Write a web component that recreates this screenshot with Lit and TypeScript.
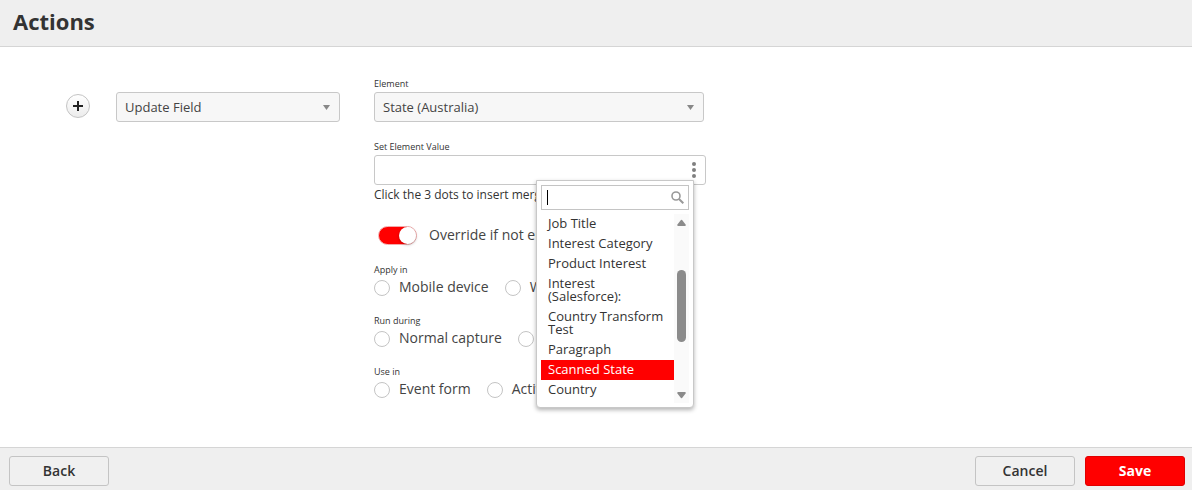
import { LitElement, html, css, nothing } from 'lit';
import { customElement, property, state } from 'lit/decorators.js';
import { classMap } from 'lit/directives/class-map.js';

interface RadioGroup {
  name: string;
  label: string;
  options: string[];
}

const GROUPS: RadioGroup[] = [
  { name: 'applyIn', label: 'Apply in', options: ['Mobile device', 'Web form'] },
  { name: 'runDuring', label: 'Run during', options: ['Normal capture', 'Transcription'] },
  { name: 'useIn', label: 'Use in', options: ['Event form', 'Activations'] },
];

const MERGE_FIELDS = [
  'Job Title',
  'Interest Category',
  'Product Interest',
  'Interest (Salesforce):',
  'Country Transform Test',
  'Paragraph',
  'Scanned State',
  'Country',
];

@customElement('merge-field-menu')
export class MergeFieldMenu extends LitElement {
  static override styles = css`
    :host {
      display: block;
      box-sizing: border-box;
      width: 158px;
      padding: 4px;
      background: #fff;
      border: 1px solid #c8c8c8;
      border-radius: 0 0 4px 4px;
      box-shadow: 0 2px 4px rgba(0, 0, 0, 0.3);
    }
    .search {
      position: relative;
      display: flex;
      align-items: center;
      height: 25px;
      box-sizing: border-box;
      padding: 0 4px 0 6px;
      border: 1px solid #c4c4c4;
    }
    .search input {
      flex: 1;
      min-width: 0;
      padding: 0;
      border: 0;
      outline: 0;
      background: none;
      font: inherit;
      caret-color: transparent;
    }
    .caret {
      position: absolute;
      left: 5px;
      top: 4px;
      width: 1px;
      height: 15px;
      background: #000;
    }
    .body {
      display: flex;
      margin-top: 4px;
      height: 189px;
    }
    .list {
      flex: 1;
      min-width: 0;
      margin: 0;
      padding: 0;
      list-style: none;
      overflow: hidden;
    }
    .option {
      padding: 3px 7px 4px;
      font-size: 13px;
      line-height: 13px;
      cursor: pointer;
    }
    .option.active {
      background: #f00;
      color: #fff;
    }
    .scrollbar {
      display: flex;
      flex-direction: column;
      align-items: center;
      width: 15px;
      box-sizing: border-box;
      padding: 5px 0 4px;
      background: #fafafa;
    }
    .track {
      flex: 1;
      width: 9px;
      padding-top: 43px;
    }
    .thumb {
      height: 72px;
      border-radius: 5px;
      background: #8b8b8b;
    }
    svg {
      display: block;
    }
  `;

  @property({ type: Array }) options: string[] = [];
  @state() private active = 'Scanned State';

  protected override render() {
    return html`
      <div class="search">
        <input type="text" aria-label="Search merge fields">
        <span class="caret"></span>
        <svg width="13" height="13" viewBox="0 0 13 13" fill="none" stroke="#999">
          <circle cx="5" cy="5" r="4" stroke-width="1.6"></circle>
          <path d="M8 8L12.3 12.3" stroke-width="2"></path>
        </svg>
      </div>
      <div class="body">
        <ul class="list" role="listbox" aria-label="Merge fields">
          ${this.options.map(
            (option) => html`
              <li
                class=${classMap({ option: true, active: option === this.active })}
                role="option"
                aria-selected=${option === this.active}
                @mouseenter=${() => (this.active = option)}
              >${option}</li>
            `
          )}
        </ul>
        <div class="scrollbar">
          <svg width="9" height="8" viewBox="0 0 9 8" fill="#8b8b8b" stroke="#8b8b8b" stroke-width="2" stroke-linejoin="round">
            <path d="M4.5 1.8L7.8 6H1.2Z"></path>
          </svg>
          <div class="track"><div class="thumb"></div></div>
          <svg width="9" height="8" viewBox="0 0 9 8" fill="#8b8b8b" stroke="#8b8b8b" stroke-width="2" stroke-linejoin="round">
            <path d="M4.5 6.2L7.8 2H1.2Z"></path>
          </svg>
        </div>
      </div>
    `;
  }
}

@customElement('app-root')
export class AppRoot extends LitElement {
  static override styles = css`
    :host {
      display: flex;
      flex-direction: column;
      min-height: 100vh;
      background: #fff;
      color: #333;
      font-family: 'Open Sans', 'Noto Sans', sans-serif;
      font-size: 14px;
    }
    header {
      padding: 6px 13px 10px;
      background: #efefef;
      border-bottom: 1px solid #d5d5d5;
    }
    h1 {
      margin: 0;
      font-size: 22px;
      line-height: 30px;
      font-weight: 700;
    }
    main {
      flex: 1;
      display: grid;
      grid-template-columns: 24px minmax(0, 224px) minmax(0, 332px);
      align-items: start;
      padding: 31px 66px 24px;
    }
    .add {
      display: grid;
      place-items: center;
      width: 24px;
      height: 24px;
      margin-top: 16px;
      padding: 0;
      border: 1px solid #c4c4c4;
      border-radius: 50%;
      background: linear-gradient(#fff, #ececec);
    }
    .action {
      margin: 14px 0 0 26px;
      width: 100%;
    }
    .details {
      display: flex;
      flex-direction: column;
      margin-left: 60px;
      width: 100%;
    }
    .select {
      display: grid;
      align-items: center;
    }
    .select select,
    .select svg {
      grid-area: 1 / 1;
    }
    .select svg {
      justify-self: end;
      margin-right: 10px;
      pointer-events: none;
    }
    .details .select {
      margin-right: 2px;
    }
    select {
      appearance: none;
      width: 100%;
      height: 30px;
      margin: 0;
      padding: 0 24px 0 8px;
      border: 1px solid #c8c8c8;
      border-radius: 3px;
      background: #f7f7f7;
      color: #444;
      font: inherit;
      font-size: 13px;
    }
    .field {
      margin-bottom: 19px;
    }
    .label {
      display: block;
      margin-bottom: 2px;
      padding: 0;
      font-size: 9px;
      line-height: 12px;
    }
    .value {
      position: relative;
      display: flex;
      height: 30px;
      box-sizing: border-box;
      border: 1px solid #c8c8c8;
      border-radius: 3px;
    }
    .value input {
      flex: 1;
      min-width: 0;
      padding: 0 8px;
      border: 0;
      outline: 0;
      background: none;
      font: inherit;
    }
    .dots {
      display: grid;
      place-items: center;
      width: 22px;
      padding: 0;
      border: 0;
      background: none;
    }
    merge-field-menu {
      position: absolute;
      top: 24px;
      right: 11px;
      z-index: 1;
    }
    .hint {
      margin: 2px 0 0;
      font-size: 12px;
      line-height: 16px;
    }
    .toggle {
      display: flex;
      align-items: center;
      gap: 12px;
      margin: 3px 0 19px 4px;
      line-height: 20px;
      color: #444;
    }
    .toggle input {
      appearance: none;
      display: flex;
      width: 39px;
      height: 19px;
      box-sizing: border-box;
      margin: 0;
      border: 1px solid #ccc;
      border-radius: 10px;
      background: #fff;
    }
    .toggle input:checked {
      justify-content: flex-end;
      border-color: #f3a9a9;
      background: linear-gradient(90deg, #f00 75%, #fff 75%);
    }
    .toggle input::before {
      content: '';
      width: 17px;
      height: 17px;
      border-radius: 50%;
      background: #fff;
      box-shadow: 0 1px 3px rgba(0, 0, 0, 0.25);
    }
    .group {
      min-width: 0;
      margin: 0 0 17px;
      padding: 0;
      border: 0;
    }
    .group:last-child {
      margin-bottom: 0;
    }
    .radios {
      display: flex;
      gap: 16px;
      overflow: hidden;
    }
    .radio {
      display: flex;
      align-items: flex-start;
      gap: 9px;
      height: 20px;
      line-height: 18px;
      color: #444;
      white-space: nowrap;
    }
    .radio input {
      appearance: none;
      flex: none;
      width: 16px;
      height: 16px;
      box-sizing: border-box;
      margin: 2px 0;
      border: 1px solid #c4c4c4;
      border-radius: 50%;
      background: #fff;
    }
    .radio input:checked {
      border: 5px solid #f00;
    }
    footer {
      display: flex;
      gap: 10px;
      padding: 8px 7px 4px 9px;
      background: #efefef;
      border-top: 1px solid #d5d5d5;
    }
    .button {
      width: 100px;
      height: 30px;
      padding: 0 0 2px;
      border: 1px solid #c4c4c4;
      border-radius: 3px;
      background: #f0f0f0;
      color: #333;
      font: inherit;
      font-weight: 600;
    }
    .button.primary {
      border-color: #e00000;
      background: #f00;
      color: #fff;
      font-weight: 700;
    }
    .back {
      margin-right: auto;
    }
    svg {
      display: block;
    }
  `;

  @state() private menuOpen = true;

  private renderSelect(id: string, value: string, label?: string) {
    return html`
      <div class="select">
        <select id=${id} aria-label=${label ?? nothing}>
          <option selected>${value}</option>
        </select>
        <svg width="7" height="5" viewBox="0 0 7 5" fill="#888"><path d="M0 0H7L3.5 5Z"></path></svg>
      </div>
    `;
  }

  private renderGroup(group: RadioGroup) {
    return html`
      <fieldset class="group">
        <legend class="label">${group.label}</legend>
        <div class="radios">
          ${group.options.map(
            (option) => html`
              <label class="radio"><input type="radio" name=${group.name} .value=${option}>${option}</label>
            `
          )}
        </div>
      </fieldset>
    `;
  }

  protected override render() {
    return html`
      <header><h1>Actions</h1></header>
      <main>
        <button class="add" aria-label="Add action">
          <svg width="10" height="10" viewBox="0 0 10 10" fill="#222"><path d="M4 0H6V4H10V6H6V10H4V6H0V4H4Z"></path></svg>
        </button>
        <div class="action">${this.renderSelect('action', 'Update Field', 'Action')}</div>
        <div class="details">
          <div class="field">
            <label class="label" for="element">Element</label>
            ${this.renderSelect('element', 'State (Australia)')}
          </div>
          <div class="field">
            <label class="label" for="value">Set Element Value</label>
            <div class="value">
              <input id="value" type="text">
              <button class="dots" aria-label="Insert merge field" @click=${() => (this.menuOpen = !this.menuOpen)}>
                <svg width="4" height="16" viewBox="0 0 4 16" fill="#808080">
                  <circle cx="2" cy="2" r="2"></circle>
                  <circle cx="2" cy="8" r="2"></circle>
                  <circle cx="2" cy="14" r="2"></circle>
                </svg>
              </button>
              ${this.menuOpen ? html`<merge-field-menu .options=${MERGE_FIELDS}></merge-field-menu>` : nothing}
            </div>
            <p class="hint">Click the 3 dots to insert merge fields</p>
          </div>
          <label class="toggle"><input type="checkbox" role="switch" checked>Override if not empty</label>
          ${GROUPS.map((group) => this.renderGroup(group))}
        </div>
      </main>
      <footer>
        <button class="button back">Back</button>
        <button class="button">Cancel</button>
        <button class="button primary">Save</button>
      </footer>
    `;
  }
}
